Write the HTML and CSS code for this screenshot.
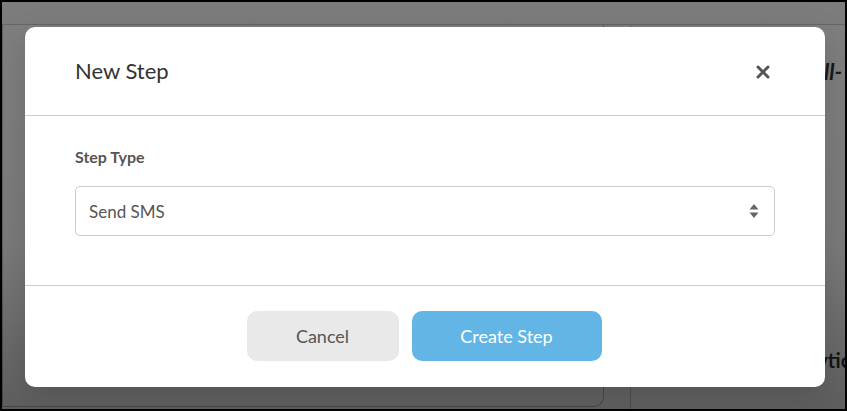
FILE: index.html
```html
<!DOCTYPE html>
<html>
<head>
  <title>New Step</title>
  <link rel="stylesheet" href="styles.css">
</head>
<body>
  <div class="frame">
    <div class="app">
      <div class="topbar"></div>
      <div class="workspace">
        <div class="main-panel">
          <div class="flow-card"></div>
        </div>
        <div class="side-panel">
          <div class="side-title">Call-</div>
          <div class="side-foot">Analytic</div>
        </div>
      </div>
    </div>

    <div class="backdrop"></div>

    <div class="modal">
      <div class="modal-header">
        <h2 class="modal-title">New Step</h2>
        <button class="close-button" aria-label="Close">
          <svg width="14" height="14" viewBox="0 0 14 14">
            <path d="M2 2 L12 12 M12 2 L2 12" stroke="#555" stroke-width="3" stroke-linecap="round"/>
          </svg>
        </button>
      </div>
      <div class="modal-body">
        <label class="field-label">Step Type</label>
        <div class="select-box">
          <span class="select-value">Send SMS</span>
          <svg class="sort-icon" width="10" height="16" viewBox="0 0 10 16">
            <path d="M5 1 L9.5 6.5 L0.5 6.5 Z" fill="#666"/>
            <path d="M0.5 9.5 L9.5 9.5 L5 15 Z" fill="#666"/>
          </svg>
        </div>
      </div>
      <div class="modal-footer">
        <button class="btn btn-cancel">Cancel</button>
        <button class="btn btn-primary">Create Step</button>
      </div>
    </div>
  </div>
</body>
</html>
```

FILE: styles.css
```css
html, body {
  margin: 0;
  padding: 0;
  background: #000;
}
.frame {
  position: relative;
  width: 843px;
  height: 407px;
  margin: 2px;
  overflow: hidden;
  font-family: Lato, "Open Sans", sans-serif;
}
.app {
  display: flex;
  flex-direction: column;
  height: 100%;
  background: #fff;
}
.topbar {
  height: 22px;
  border-bottom: 1px solid #ccc;
  background: #fafafa;
}
.workspace {
  flex: 1;
  display: flex;
}
.main-panel {
  width: 629px;
  flex-shrink: 0;
  border-right: 1px solid #ccc;
  padding: 0 26px 2px 0;
  box-sizing: border-box;
  display: flex;
}
.flow-card {
  flex: 1;
  border: 1px solid #bbb;
  border-top: none;
  border-radius: 0 0 10px 0;
}
.side-panel {
  flex: 1;
  min-width: 0;
  display: flex;
  flex-direction: column;
  justify-content: space-between;
  padding: 33px 0 37px 0;
  font-size: 20px;
  font-weight: bold;
  color: #333;
  white-space: nowrap;
}
.side-title {
  font-style: italic;
  font-size: 22px;
  padding-left: 168px;
}
.side-foot {
  padding-left: 146px;
}
.backdrop {
  position: absolute;
  inset: 0;
  background: linear-gradient(to bottom, rgba(0,0,0,0.5) 0%, rgba(0,0,0,0.52) 60%, rgba(0,0,0,0.63) 100%);
}
.modal {
  position: absolute;
  left: 23px;
  top: 25px;
  width: 800px;
  height: 360px;
  background: #fff;
  border-radius: 10px;
  display: flex;
  flex-direction: column;
  box-shadow: 0 8px 30px rgba(0,0,0,0.15);
}
.modal-header {
  height: 88px;
  border-bottom: 1px solid #ccc;
  display: flex;
  align-items: center;
  justify-content: space-between;
  padding: 0 55px 0 50px;
}
.modal-title {
  margin: 0 0 2px 0;
  font-size: 22px;
  font-weight: normal;
  color: #333;
}
.close-button {
  border: none;
  background: none;
  padding: 0;
  cursor: pointer;
  display: flex;
  margin-top: 2px;
}
.modal-body {
  height: 170px;
  border-bottom: 1px solid #ccc;
  padding: 31px 50px 0 50px;
  box-sizing: border-box;
}
.field-label {
  display: block;
  font-size: 16px;
  font-weight: bold;
  color: #555;
  margin-bottom: 20px;
}
.select-box {
  height: 50px;
  border: 1px solid #ccc;
  border-radius: 5px;
  box-sizing: border-box;
  display: flex;
  align-items: center;
  justify-content: space-between;
  padding: 0 15px 0 13px;
}
.select-value {
  font-size: 17px;
  color: #555;
}
.modal-footer {
  flex: 1;
  display: flex;
  justify-content: center;
  align-items: flex-start;
  gap: 13px;
  padding: 25px 2px 0 0;
}
.btn {
  height: 50px;
  border: none;
  border-radius: 10px;
  font-family: Lato, "Open Sans", sans-serif;
  font-size: 18px;
  cursor: pointer;
}
.btn-cancel {
  width: 152px;
  background: #e9e9e9;
  color: #555;
}
.btn-primary {
  width: 190px;
  background: #62b5e5;
  color: #fff;
}
```
